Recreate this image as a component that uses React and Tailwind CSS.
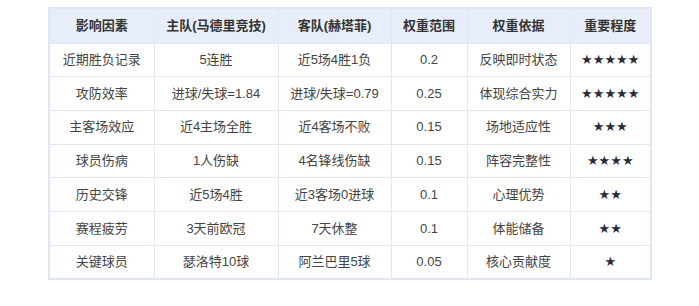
import React from 'react';

const rows = [
  ['近期胜负记录', '5连胜', '近5场4胜1负', '0.2', '反映即时状态', '★★★★★'],
  ['攻防效率', '进球/失球=1.84', '进球/失球=0.79', '0.25', '体现综合实力', '★★★★★'],
  ['主客场效应', '近4主场全胜', '近4客场不败', '0.15', '场地适应性', '★★★'],
  ['球员伤病', '1人伤缺', '4名锋线伤缺', '0.15', '阵容完整性', '★★★★'],
  ['历史交锋', '近5场4胜', '近3客场0进球', '0.1', '心理优势', '★★'],
  ['赛程疲劳', '3天前欧冠', '7天休整', '0.1', '体能储备', '★★'],
  ['关键球员', '瑟洛特10球', '阿兰巴里5球', '0.05', '核心贡献度', '★'],
];

const headers = ['影响因素', '主队(马德里竞技)', '客队(赫塔菲)', '权重范围', '权重依据', '重要程度'];
const widths = ['w-[105px]', 'w-[124px]', 'w-[113px]', 'w-[76px]', 'w-[103px]', 'w-[81px]'];

export default function App() {
  return (
    <div className="w-[699px] h-[306px] bg-white pt-[7px] pl-[48px]" style={{ fontFamily: '"Liberation Sans", "Noto Sans CJK SC", sans-serif' }}>
      <table className="border-collapse border-2 border-[#e1e6f6] text-[13px] text-[#333]">
        <thead>
          <tr className="bg-[#e8edfb] h-[35px]">
            {headers.map((h, i) => (
              <th key={h} className={`${widths[i]} border border-[#e4e7f3] font-bold text-center text-[#333] p-0`}>{h}</th>
            ))}
          </tr>
        </thead>
        <tbody>
          {rows.map((r) => (
            <tr key={r[0]} className="h-[33.7px]">
              {r.map((c, i) => (
                <td
                  key={i}
                  className={`${widths[i]} border border-[#e4e7f3] text-center p-0 ${i === 5 ? 'text-[#2a2a38] font-["DejaVu_Sans"]' : 'text-[#444]'}`}
                >
                  {c}
                </td>
              ))}
            </tr>
          ))}
        </tbody>
      </table>
    </div>
  );
}
